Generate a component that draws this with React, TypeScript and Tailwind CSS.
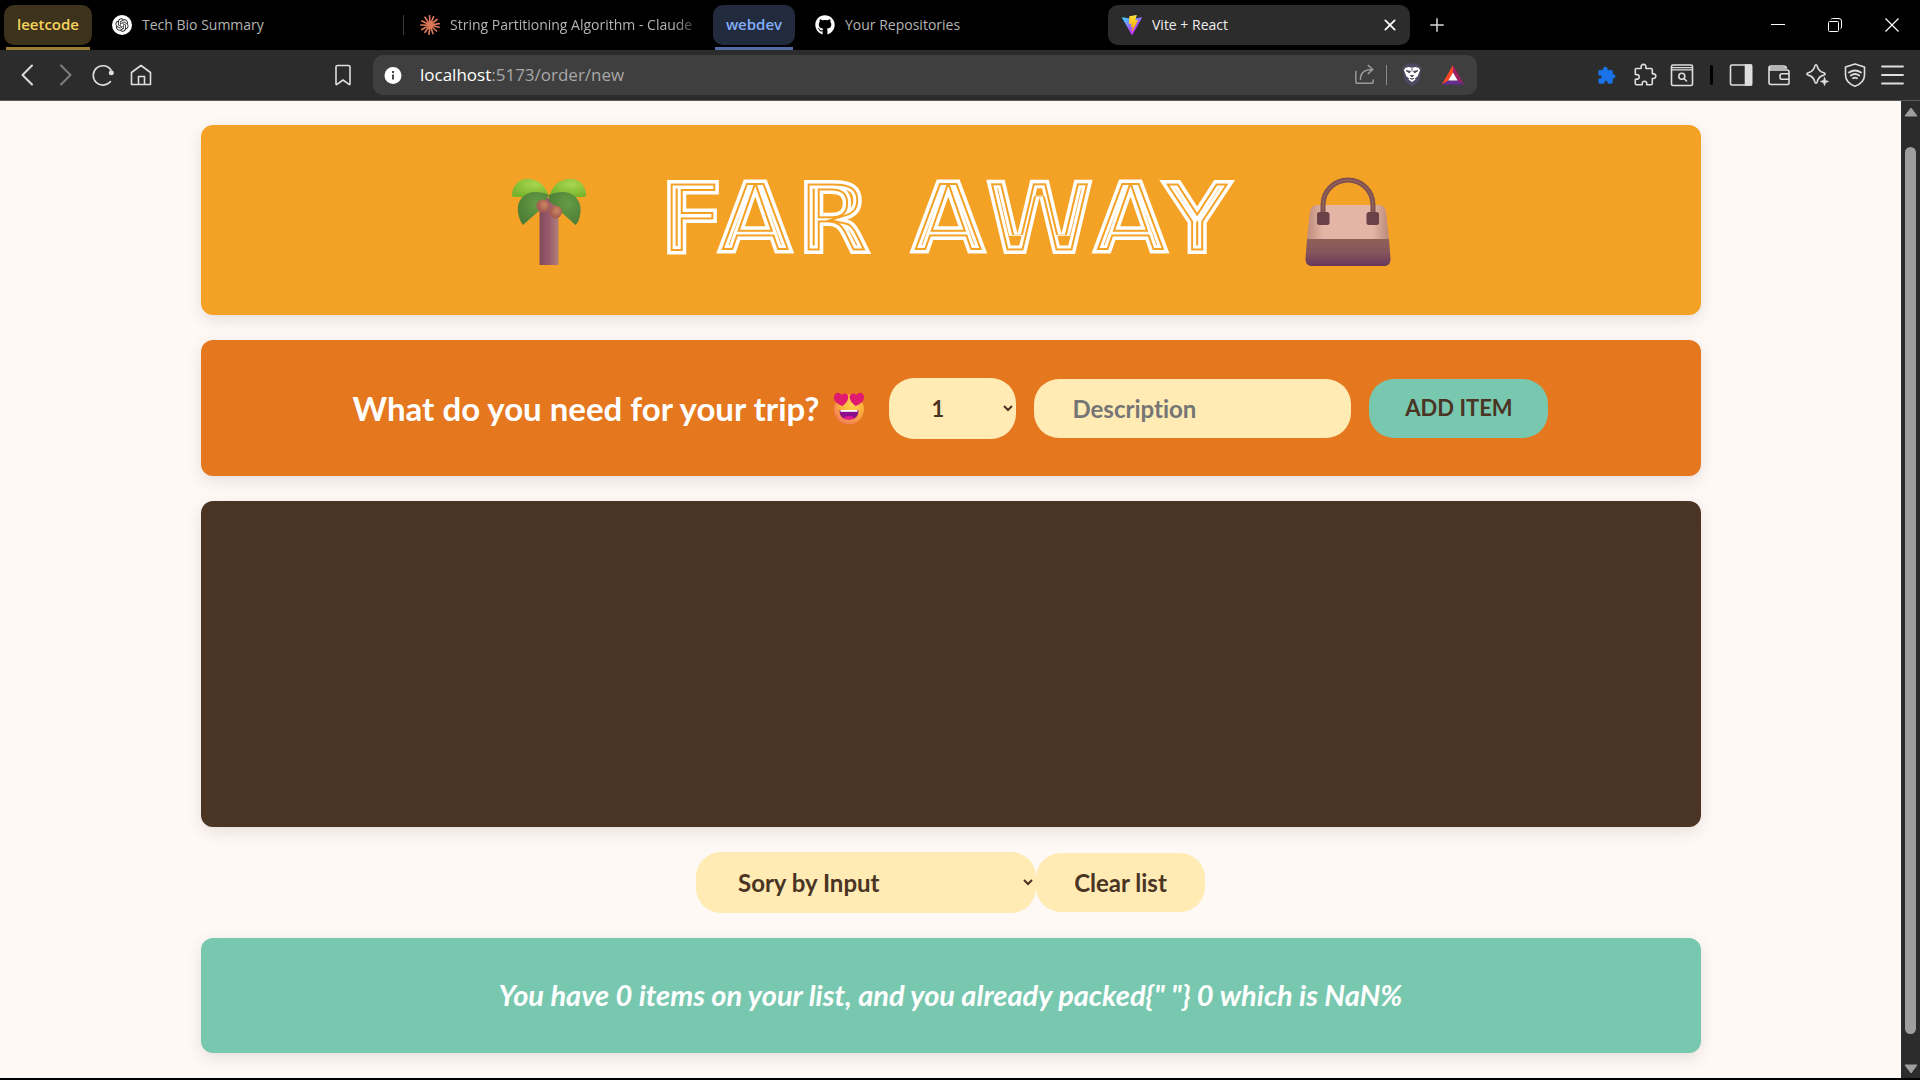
import { useState, type ReactNode } from "react";
import { FaGithub } from "react-icons/fa";
import { RiOpenaiFill } from "react-icons/ri";

type IconProps = { className?: string; children: ReactNode; box?: string };

function Line({ className = "size-6", children, box = "0 0 24 24" }: IconProps) {
  return (
    <svg
      viewBox={box}
      className={className}
      fill="none"
      stroke="currentColor"
      strokeWidth="1.6"
      strokeLinecap="round"
      strokeLinejoin="round"
      aria-hidden="true"
    >
      {children}
    </svg>
  );
}

const puzzlePath =
  "M3 5.5h4.6c.6 0 .8-.6.6-1.1-.5-1.400.4-3 2.300-3s2.800 1.600 2.300 3c-.2.5 0 1.100.6 1.100H18c.8 0 1.300.5 1.300 1.300v3.400c0 .6.5.8 1 .7 1.400-.3 2.500.7 2.500 2.200s-1.100 2.600-2.500 2.300c-.5-.1-1 .1-1 .7v4.400c0 .8-.5 1.300-1.300 1.300h-3.600c-.6 0-.8-.5-.7-1 .3-1.500-.6-2.500-2.200-2.500s-2.600 1-2.300 2.500c.1.5-.1 1-.7 1H3.600c-.8 0-1.300-.5-1.300-1.300v-3.700c0-.6.5-.8 1-.7 1.500.4 2.900-.6 2.900-2.200s-1.400-2.700-2.900-2.300c-.5.1-1-.1-1-.7V6.800c0-.8.2-1.300.7-1.300Z";

function ViteLogo() {
  return (
    <svg viewBox="0 0 256 257" className="size-5" aria-hidden="true">
      <defs>
        <linearGradient id="viteBody" x1="0" x2="0.58" y1="0.08" y2="0.78">
          <stop offset="0" stopColor="#41D1FF" />
          <stop offset="1" stopColor="#BD34FE" />
        </linearGradient>
        <linearGradient id="viteBolt" x1="0.43" x2="0.5" y1="0.02" y2="0.9">
          <stop offset="0" stopColor="#FFEA83" />
          <stop offset="0.08" stopColor="#FFDD35" />
          <stop offset="1" stopColor="#FFA800" />
        </linearGradient>
      </defs>
      <path
        fill="url(#viteBody)"
        d="M255.153 37.938L134.897 252.976c-2.483 4.44-8.862 4.466-11.382.048L.875 37.958c-2.746-4.814 1.371-10.646 6.827-9.67l120.385 21.517a6.537 6.537 0 0 0 2.322-.004l117.867-21.483c5.438-.991 9.574 4.796 6.877 9.62Z"
      />
      <path
        fill="url(#viteBolt)"
        d="M185.432.063L96.44 17.501a3.268 3.268 0 0 0-2.634 3.014l-5.474 92.456a3.268 3.268 0 0 0 3.997 3.378l24.777-5.718c2.318-.535 4.413 1.507 3.936 3.838l-7.361 36.047c-.495 2.426 1.782 4.5 4.151 3.78l15.304-4.649c2.372-.72 4.652 1.36 4.15 3.788l-11.698 56.621c-.732 3.542 3.979 5.473 5.943 2.437l1.313-2.028l72.516-144.72c1.215-2.423-.88-5.186-3.54-4.672l-25.505 4.922c-2.396.462-4.435-1.77-3.759-4.114l16.646-57.705c.677-2.35-1.37-4.583-3.769-4.113Z"
      />
    </svg>
  );
}

function ClaudeLogo() {
  return (
    <svg viewBox="0 0 20 20" className="size-5" aria-hidden="true" stroke="#d97757" strokeWidth="1.7" strokeLinecap="round">
      <path d="M10 10 9.500.8M10 10l3.500-8.200M10 10l7-5.500M10 10l9.200-1.300M10 10l9 2.300M10 10l6.500 6M10 10l3 8.500M10 10l-1 9.200M10 10l-5 7.300M10 10l-8.200 4.500M10 10.300.8 10M10 10 2 6M10 10 5 2.300" />
    </svg>
  );
}

function TabStrip() {
  return (
    <div className="flex h-[50px] items-center bg-black pl-1 font-['Open_Sans',sans-serif] text-sm">
      <div className="relative flex h-10 w-[88px] items-center justify-center rounded-[10px] bg-[#3d321b] text-[15px] font-semibold text-[#f8d35d]">
        leetcode
        <span className="absolute -bottom-[5px] left-[2px] h-[3px] w-[84px] bg-[#9c7c35]" />
      </div>
      <div className="ml-5 flex w-[292px] items-center gap-2.5 border-r border-[#3a3a3a] text-[#b4b4b4]">
        <span className="flex size-5 items-center justify-center rounded-full bg-white text-[#222]">
          <RiOpenaiFill className="size-4" />
        </span>
        Tech Bio Summary
      </div>
      <div className="ml-4 flex items-center gap-2.5 text-[#b4b4b4]">
        <ClaudeLogo />
        <span className="w-[254px] whitespace-nowrap [mask-image:linear-gradient(to_right,black_88%,transparent)]">
          String Partitioning Algorithm - Claude
        </span>
      </div>
      <div className="relative ml-[9px] flex h-10 w-[82px] items-center justify-center rounded-[10px] bg-[#222b3d] text-[15px] font-semibold text-[#82adf8]">
        webdev
        <span className="absolute -bottom-[5px] left-[2px] h-[3px] w-[78px] bg-[#526da6]" />
      </div>
      <div className="ml-5 flex w-[293px] items-center gap-2.5 text-[#b4b4b4]">
        <FaGithub className="size-5 text-white" />
        Your Repositories
      </div>
      <div className="flex h-10 w-[302px] items-center gap-2.5 rounded-[10px] bg-[#2c2c2c] pr-3 pl-3.5 text-[#ededed]">
        <ViteLogo />
        <span className="flex-1">Vite + React</span>
        <button aria-label="Close tab" className="text-white">
          <Line className="size-4">
            <path strokeWidth="2.600" d="m5 5 14 14M19 5 5 19" />
          </Line>
        </button>
      </div>
      <button aria-label="New tab" className="ml-[18px] text-[#d8d8d8]">
        <Line className="size-[18px]">
          <path strokeWidth="2" strokeLinecap="butt" d="M12 3v18M3 12h18" />
        </Line>
      </button>
      <div className="ml-auto flex items-center gap-[41px] pr-5 text-white">
        <button aria-label="Minimize">
          <svg viewBox="0 0 16 16" className="size-4" aria-hidden="true">
            <path d="M1 7.500h14" stroke="currentColor" />
          </svg>
        </button>
        <button aria-label="Restore">
          <svg viewBox="0 0 16 16" className="size-4" fill="none" stroke="currentColor" aria-hidden="true">
            <rect x="1.500" y="4.500" width="10" height="10" rx="1" />
            <path d="M4 2.500q.3-1 1.500-1H12q2.500 0 2.500 2.500v6q0 1.300-1 1.500" />
          </svg>
        </button>
        <button aria-label="Close">
          <svg viewBox="0 0 16 16" className="size-4" stroke="currentColor" strokeWidth="1.200" aria-hidden="true">
            <path d="m1.500 1.500 13 13M14.500 1.500l-13 13" />
          </svg>
        </button>
      </div>
    </div>
  );
}

function Toolbar() {
  return (
    <div className="flex h-[51px] items-center border-b border-[#5c5c5c] bg-[#2c2c2c] pr-[15px] pl-4 text-[#dedede]">
      <div className="flex items-center gap-3.5">
        <button aria-label="Back">
          <Line>
            <path d="m16 2.500-9.500 9.500 9.500 9.500" strokeWidth="2" />
          </Line>
        </button>
        <button aria-label="Forward" className="text-[#7e7e7e]">
          <Line>
            <path d="m7 2.500 9.500 9.500L7 21.500" strokeWidth="2" />
          </Line>
        </button>
        <button aria-label="Reload">
          <Line>
            <path d="M18.500 18.500A9.700 9.700 0 1 1 19 7" />
            <circle cx="19.300" cy="9.800" r="2.500" fill="currentColor" stroke="none" />
          </Line>
        </button>
        <button aria-label="Home">
          <Line>
            <path d="M1.500 9.500 11 2.500l9.500 7V21.500h-6v-8h-6v8h-7Z M8.500 21.500h6" />
          </Line>
        </button>
      </div>
      <button aria-label="Bookmark" className="ml-[177px]">
        <Line>
          <path d="M5 21V4q0-1.500 1.500-1.500h11Q19 2.500 19 4v17q0 1-1 .3l-6-4.300-6 4.300q-1 .7-1-.3Z" />
        </Line>
      </button>
      <div className="mr-[120px] ml-[18px] flex h-10 flex-1 items-center rounded-[10px] bg-[#3f3f3f] pr-3 pl-2.5">
        <svg viewBox="0 0 20 20" className="size-5" aria-hidden="true">
          <circle cx="10" cy="10.500" r="8.500" fill="#fff" />
          <path d="M10 9.500v5M10 6v2" stroke="#333" strokeWidth="1.800" />
        </svg>
        <div className="ml-[17px] flex-1 font-['Open_Sans',sans-serif] text-[17px] text-[#a8a8a8]">
          <span className="text-white">localhost</span>:5173/order/new
        </div>
        <button aria-label="Share" className="text-[#9a9a9a]">
          <Line className="size-[22px]">
            <path d="M2 8v11q0 2 2 2h15q2 0 2-2v-1.500M7 17c0-7 4.500-11 13-11M15.500 1.500 20.500 6l-5 4.500" />
          </Line>
        </button>
        <span className="ml-2.5 h-5 w-px bg-[#8a8a8a]" />
        <button aria-label="Shields" className="ml-[13px]">
          <svg viewBox="0 0 24 24" className="size-6" aria-hidden="true">
            <path d="m6 1.500 2-.9h8l2 .9 3.500 3-.7 3.500-1 8q-.5 2-2.300 3.300L12 23.500l-5.500-4.200Q4.700 18 4.200 16L3.200 8l-.7-3.500Z" fill="#4b4a62" />
            <path d="m5 5 3.500-1 3.500.7 3.500-.7L19 5l1 2.500-2.500 6-2.500 1.700.5 1.200-3.500 2.500-3.500-2.500.5-1.200-2.500-1.700-2.500-6Z" fill="#fff" />
            <path d="m6 7.500 4.500.9-1.200 1.500ZM18 7.500l-4.500.9 1.200 1.500ZM10.300 12.500h3.400l-1.700 1.500ZM9.800 15.300l2.200 1 2.200-1M12 5.200v3.300" fill="#3f3f4f" stroke="#3f3f4f" strokeWidth=".8" />
          </svg>
        </button>
        <button aria-label="Rewards" className="ml-[17px]">
          <svg viewBox="0 0 24 22" className="h-[22px] w-6" aria-hidden="true">
            <path d="M12 1 .8 20.500 7.500 16.500 12 8.500Z" fill="#ff4724" />
            <path d="M12 1v7.500l4.500 8 6.700 4Z" fill="#9e1f63" />
            <path d="M.8 20.500h22.400l-6.700-4h-9Z" fill="#662d91" />
            <path d="m12 8.500 4.600 8H7.400Z" fill="#fff" />
          </svg>
        </button>
      </div>
      <button aria-label="Active extension" className="text-[#1a73e8]">
        <svg viewBox="0 0 24 24" className="size-[19px]" fill="currentColor" stroke="currentColor" aria-hidden="true">
          <path d={puzzlePath} />
        </svg>
      </button>
      <div className="ml-[17px] flex items-center gap-[13px]">
        <button aria-label="Extensions">
          <Line>
            <path d={puzzlePath} />
          </Line>
        </button>
        <button aria-label="Search tabs">
          <Line>
            <rect x="1.500" y="2" width="21" height="20.500" rx="1.500" />
            <path d="M1.500 4.700h21M1.500 6.800h21" strokeWidth="1.200" />
            <circle cx="11.800" cy="13.300" r="3" />
            <path d="m14 15.500 2.500 2.500" />
          </Line>
        </button>
      </div>
      <span className="mx-[16px] h-5 w-[3px] rounded-full bg-black" />
      <div className="flex items-center gap-3.5">
        <button aria-label="Sidebar">
          <Line>
            <rect x="1.500" y="2" width="21" height="20" rx="1.500" />
            <path d="M16.500 2h6v20h-6Z" fill="currentColor" />
          </Line>
        </button>
        <button aria-label="Wallet">
          <Line>
            <path d="M2 4.500v15q0 2 2 2h16.500q1.500 0 1.500-1.500V9q0-2-2-2H4Q2 7 2 5q0-2 2-2h13q2 0 2.500 2M3 5h16.500M22 10.800h-7q-2 0-2 2v1.400q0 2 2 2h7" />
          </Line>
        </button>
        <button aria-label="Assistant">
          <Line>
            <path d="M11 1.800c.6 0 .9.4 1.100 1.100 1 4.200 2.700 5.900 6.700 6.900 1.700.5 1.700 1.800 0 2.300-4 1-5.700 2.700-6.700 6.900-.4 1.500-1.800 1.500-2.200 0-1-4.200-2.700-5.900-6.700-6.900-1.700-.5-1.700-1.800 0-2.300 4-1 5.700-2.700 6.700-6.900.2-.7.500-1.100 1.100-1.100Z" />
            <path d="m19.500 14.500 1 3 3 1-3 1-1 3-1-3-3-1 3-1Z" fill="currentColor" strokeWidth=".8" />
          </Line>
        </button>
        <button aria-label="VPN">
          <Line>
            <path d="m12 .9 9.500 3v8q0 7.500-9.500 11.300Q2.500 19.400 2.500 11.900v-8Z" />
            <path d="M6 9.500q6-4 12 0M7.800 12.500q4.200-3 8.400 0M10 15.300q2-1.300 4 0" strokeWidth="1.800" />
          </Line>
        </button>
        <button aria-label="Menu">
          <Line>
            <path d="M1 3.500h21M1 12h21M1 20.500h21" strokeWidth="1.800" />
          </Line>
        </button>
      </div>
    </div>
  );
}

function Scrollbar() {
  return (
    <div className="flex w-[19px] flex-col items-center bg-[#2c2c2c] text-[#9f9f9f]">
      <svg viewBox="0 0 14 10" className="mt-1.5 h-2.5 w-3.5" fill="currentColor" stroke="currentColor" strokeLinejoin="round" aria-hidden="true">
        <path d="M7 1 13 9H1Z" />
      </svg>
      <span className="mt-[30px] mb-[30px] w-[11px] flex-1 rounded-full bg-[#9f9f9f]" />
      <svg viewBox="0 0 14 10" className="mb-1 h-2.5 w-3.5" fill="currentColor" stroke="currentColor" strokeLinejoin="round" aria-hidden="true">
        <path d="M7 9 13 1H1Z" />
      </svg>
    </div>
  );
}

function PalmTree() {
  return (
    <svg viewBox="0 0 76 88" className="mt-2 h-[88px] w-[76px]" aria-hidden="true">
      <defs>
        <linearGradient id="trunk">
          <stop offset="0" stopColor="#7f4c5c" />
          <stop offset=".5" stopColor="#985a6c" />
          <stop offset="1" stopColor="#b0807a" />
        </linearGradient>
        <radialGradient id="leafLight" cx=".6" cy=".3" r=".7">
          <stop offset="0" stopColor="#a8d64e" />
          <stop offset="1" stopColor="#79b32e" />
        </radialGradient>
        <radialGradient id="leafDark" cx=".6" cy=".35" r=".7">
          <stop offset="0" stopColor="#659d45" />
          <stop offset="1" stopColor="#4c7c36" />
        </radialGradient>
        <radialGradient id="nut" cx=".6" cy=".4">
          <stop offset="0" stopColor="#cb8763" />
          <stop offset="1" stopColor="#a75d50" />
        </radialGradient>
      </defs>
      <path d="M28.500 20h19v67h-19Z" fill="url(#trunk)" />
      <path d="M38 19C32-5 2-5 .8 17q0 2 2 2Z" fill="url(#leafLight)" />
      <path d="M38 19C44-5 74-5 75.200 17q0 2-2 2Z" fill="url(#leafLight)" />
      <path d="M38 17C20 9 5 18 7 34q1 8 5 13l17-15Z" fill="url(#leafDark)" />
      <path d="M38 17c18-8 33 1 31.500 17-1 7-2 10-5 13L38 23Z" fill="url(#leafDark)" />
      <circle cx="32" cy="28" r="6.500" fill="url(#nut)" />
      <circle cx="44.500" cy="34" r="6.500" fill="url(#nut)" />
    </svg>
  );
}

function Handbag() {
  return (
    <svg viewBox="0 0 86 90" className="mt-2 h-[90px] w-[86px]" aria-hidden="true">
      <defs>
        <linearGradient id="bagTop">
          <stop offset="0" stopColor="#bd8b7c" />
          <stop offset=".2" stopColor="#e4b5a4" />
          <stop offset=".8" stopColor="#e4b5a4" />
          <stop offset="1" stopColor="#b98a7a" />
        </linearGradient>
        <linearGradient id="bagBase" x2="0" y2="1">
          <stop offset="0" stopColor="#8f5f59" />
          <stop offset=".5" stopColor="#85565a" />
          <stop offset="1" stopColor="#67375b" />
        </linearGradient>
      </defs>
      <path d="M12 28h62q6 0 7 7l3 27H2l3-27q1-7 7-7Z" fill="url(#bagTop)" />
      <path d="M2 62h82l1.500 20q0 7-6 7h-73q-6 0-6-7Z" fill="url(#bagBase)" />
      <path d="M18 42V28a25 25 0 0 1 50 0v14" fill="none" stroke="#7d5050" strokeWidth="5" />
      <path d="M18 42V28a25 25 0 0 1 50 0v14" fill="none" stroke="#94645c" strokeWidth="1.500" />
      <rect x="12" y="35" width="12.500" height="13" rx="2.500" fill="#6a4148" />
      <rect x="61.500" y="35" width="12.500" height="13" rx="2.500" fill="#6a4148" />
    </svg>
  );
}

function HeartEyes() {
  return (
    <svg viewBox="0 0 32 36" className="h-9 w-8" role="img" aria-label="Heart eyes">
      <defs>
        <radialGradient id="face" cx=".6" cy=".35" r=".7">
          <stop offset="0" stopColor="#ffd24e" />
          <stop offset=".6" stopColor="#fbab3b" />
          <stop offset="1" stopColor="#f0735f" />
        </radialGradient>
      </defs>
      <circle cx="16" cy="19.500" r="15" fill="url(#face)" />
      <path d="M9.500 16C3 13.500.5 10 1 6.500 1.700 2 6.500 1.500 8.500 5c2.500-3 7-1.500 6.800 2.500-.3 3.500-2.800 6-5.800 8.500Z" fill="#e01b6f" />
      <path d="M22.500 16c6.500-2.500 9-6 8.500-9.500-.7-4.500-5.500-5-7.500-1.500-2.500-3-7-1.500-6.800 2.500.3 3.500 2.800 6 5.800 8.500Z" fill="#e01b6f" />
      <path d="M6.500 20h19q.5 9.500-9.500 9.500T6.500 20Z" fill="#8a0f8a" />
      <path d="M7.500 20h17v1.800h-17Z" fill="#fff" />
      <path d="M10 28q6-4 12 0-2.500 1.700-6 1.700T10 28Z" fill="#e01b8f" />
    </svg>
  );
}

/* Multi-line display lettering: nested strokes clipped to the glyph shapes. */
function Wordmark() {
  return (
    <svg viewBox="0 0 640 124" className="h-[124px] w-[640px]" strokeLinejoin="miter">
      <clipPath id="glyphs">
        <use href="#brand" />
      </clipPath>
      <g clipPath="url(#glyphs)" className="fill-[#f4a226]">
        <text id="brand" x="320" y="98" textAnchor="middle" className="font-['DejaVu_Sans',sans-serif] text-[102px] font-bold">
          FAR AWAY
        </text>
        <use href="#brand" className="fill-none" stroke="#fff" strokeWidth="17" />
        <use href="#brand" className="fill-none" stroke="#f4a226" strokeWidth="11" />
        <use href="#brand" className="fill-none" stroke="#fff" strokeWidth="7" />
      </g>
    </svg>
  );
}

export default function App() {
  const [description, setDescription] = useState("");
  return (
    <div className="flex min-h-screen flex-col bg-black">
      <TabStrip />
      <Toolbar />
      <div className="mb-0.5 flex flex-1">
        <div className="flex-1 bg-[#fff9f5] px-6 py-6 font-['Lato',sans-serif] text-2xl font-bold text-[#4a3423] [font-variant-ligatures:none]">
          <div className="mx-auto flex max-w-[1500px] flex-col gap-[25px]">
            <header className="flex h-[190px] items-center justify-center gap-[39px] rounded-xl bg-[#f4a226] pb-1 shadow-[0_5px_15px_rgba(60,30,40,0.12)]">
              <PalmTree />
              <h1>
                <Wordmark />
              </h1>
              <Handbag />
            </header>

            <form
              className="flex h-[136px] items-center justify-center gap-[18px] rounded-xl bg-[#e5771f] shadow-[0_5px_15px_rgba(60,30,40,0.12)]"
              onSubmit={(e) => e.preventDefault()}
            >
              <h3 className="mr-1.5 flex items-center gap-3.5 text-[33px] text-white">
                What do you need for your trip?
                <HeartEyes />
              </h3>
              <select aria-label="Quantity" className="h-[61px] w-[127px] rounded-[25px] bg-[#ffebb3] px-[38px] text-[22px]">
                <option>1</option>
                <option>2</option>
                <option>3</option>
              </select>
              <input
                aria-label="Description"
                placeholder="Description"
                value={description}
                onChange={(e) => setDescription(e.target.value)}
                className="h-[59px] w-[317px] rounded-[25px] bg-[#ffebb3] px-[38px] placeholder:text-[#757575]"
              />
              <button className="h-[59px] w-[179px] rounded-[25px] bg-[#78c8b0] text-[22px]">ADD ITEM</button>
            </form>

            <section className="min-h-[326px] rounded-xl bg-[#4a3423] shadow-[0_5px_15px_rgba(60,30,40,0.12)]">
              <ul aria-label="Packing list" />
            </section>

            <div className="flex items-center justify-center">
              <select aria-label="Sort order" className="h-[61px] w-[340px] rounded-[25px] bg-[#ffebb3] px-[38px]">
                <option>Sory by Input</option>
              </select>
              <button className="h-[59px] w-[169px] rounded-[25px] bg-[#ffebb3]">Clear list</button>
            </div>

            <footer className="flex h-[115px] items-center justify-center rounded-xl bg-[#78c8b0] text-[29px] text-white italic shadow-[0_5px_15px_rgba(60,30,40,0.12)]">
              <em>{'You have 0 items on your list, and you already packed{" "} 0 which is NaN%'}</em>
            </footer>
          </div>
        </div>
        <Scrollbar />
      </div>
    </div>
  );
}
